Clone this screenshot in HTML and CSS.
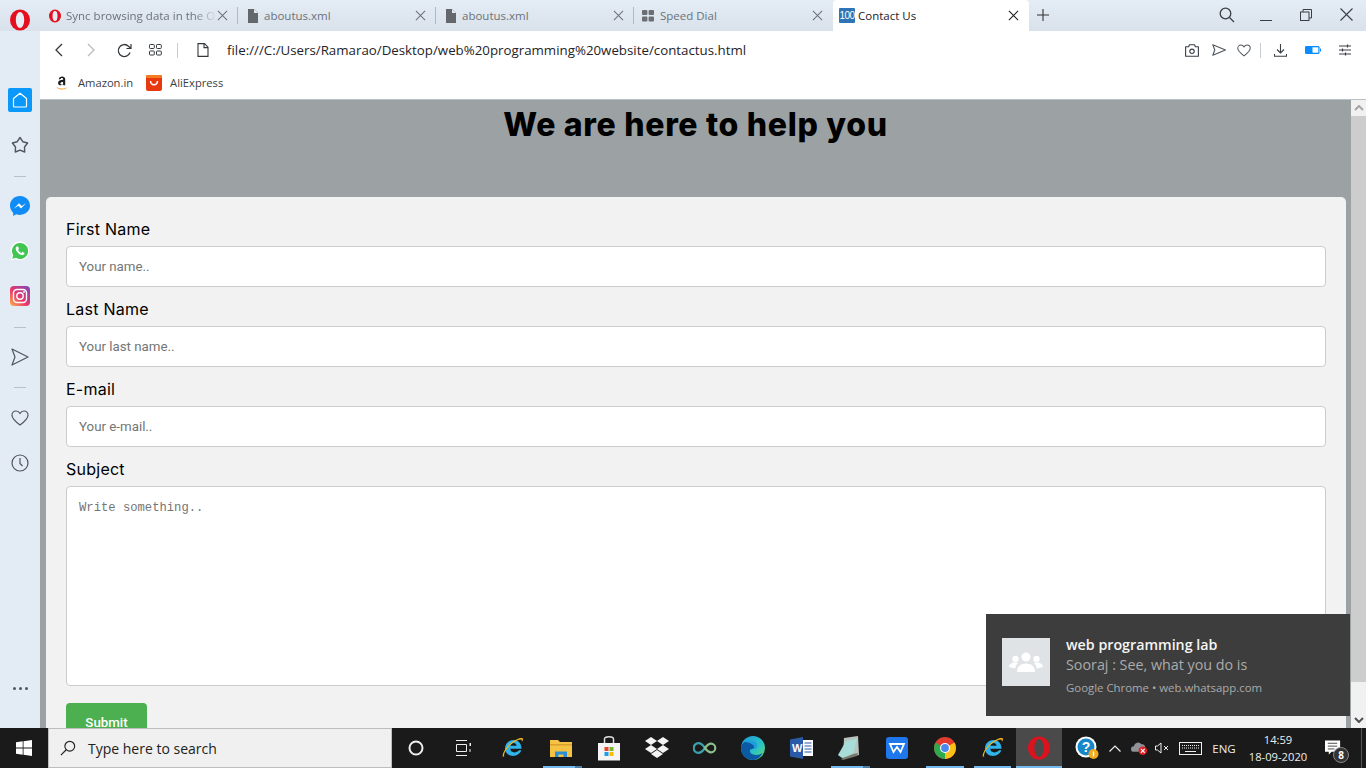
FILE: index.html
```html
<!DOCTYPE html>
<html lang="en">
<head>
    <meta charset="UTF-8">
    <title>Contact Us</title>
    <link rel="stylesheet" href="styles.css">
</head>
<body>
<div class="browser">
    <div class="tabbar">
        <div class="logo-slot">
            <svg width="22" height="24" viewBox="0 0 22 24"><ellipse cx="11" cy="12" rx="10" ry="10.5" fill="#e3101f"/><ellipse cx="11" cy="12" rx="4.2" ry="8" fill="#e6edf5"/></svg>
        </div>
        <div class="tab">
            <svg class="fav" width="14" height="14" viewBox="0 0 14 14"><ellipse cx="7" cy="7" rx="6" ry="6.5" fill="#e3101f"/><ellipse cx="7" cy="7" rx="2.5" ry="5" fill="#e6edf5"/></svg>
            <span class="tab-title faded">Sync browsing data in the O</span>
            <svg class="tab-x" width="11" height="11" viewBox="0 0 12 12"><path d="M1 1l10 10M11 1L1 11" stroke="#6d7176" stroke-width="1.1"/></svg>
        </div>
        <div class="tab">
            <svg class="fav fav-file" width="12" height="14" viewBox="0 0 12 14"><path d="M1 0h6l4 4v10H1z" fill="#64686c"/><path d="M7 0v4h4" fill="#e2eaf3"/></svg>
            <span class="tab-title">aboutus.xml</span>
            <svg class="tab-x" width="11" height="11" viewBox="0 0 12 12"><path d="M1 1l10 10M11 1L1 11" stroke="#6d7176" stroke-width="1.1"/></svg>
        </div>
        <div class="tab">
            <svg class="fav fav-file" width="12" height="14" viewBox="0 0 12 14"><path d="M1 0h6l4 4v10H1z" fill="#64686c"/><path d="M7 0v4h4" fill="#e2eaf3"/></svg>
            <span class="tab-title">aboutus.xml</span>
            <svg class="tab-x" width="11" height="11" viewBox="0 0 12 12"><path d="M1 1l10 10M11 1L1 11" stroke="#6d7176" stroke-width="1.1"/></svg>
        </div>
        <div class="tab no-line">
            <svg class="fav fav-dial" width="12" height="12" viewBox="0 0 12 12" fill="#6b6f73"><rect width="5.4" height="5" rx="1"/><rect x="6.6" width="5.4" height="5" rx="1"/><rect y="6.4" width="5.4" height="5" rx="1"/><rect x="6.6" y="6.4" width="5.4" height="5" rx="1"/></svg>
            <span class="tab-title">Speed Dial</span>
            <svg class="tab-x" width="11" height="11" viewBox="0 0 12 12"><path d="M1 1l10 10M11 1L1 11" stroke="#6d7176" stroke-width="1.1"/></svg>
        </div>
        <div class="tab active">
            <span class="fav-100">100</span>
            <span class="tab-title">Contact Us</span>
            <svg class="tab-x" width="11" height="11" viewBox="0 0 12 12"><path d="M1 1l10 10M11 1L1 11" stroke="#222" stroke-width="1.2"/></svg>
        </div>
        <svg class="new-tab" width="12" height="12" viewBox="0 0 12 12"><path d="M6 0v12M0 6h12" stroke="#333" stroke-width="1.1"/></svg>
        <div class="window-btns">
            <svg class="w-search" width="16" height="16" viewBox="0 0 16 16" fill="none" stroke="#3a3f45" stroke-width="1.3"><circle cx="6.5" cy="6.5" r="5.3"/><path d="M10.5 10.5L15 15"/></svg>
            <svg class="w-min" width="12" height="12" viewBox="0 0 12 12"><path d="M0 10.5h12" stroke="#3a3f45" stroke-width="1"/></svg>
            <svg class="w-max" width="12" height="12" viewBox="0 0 12 12" fill="none" stroke="#3a3f45"><rect x=".5" y="3" width="8.5" height="8.5"/><path d="M3 3V.5h8.5V9H9"/></svg>
            <svg class="w-close" width="13" height="13" viewBox="0 0 13 13"><path d="M.5.5l12 12M12.5.5l-12 12" stroke="#3a3f45" stroke-width="1.1"/></svg>
        </div>
    </div>

    <div class="middle">
        <aside class="sidebar">
            <div class="side-home">
                <svg width="16" height="16" viewBox="0 0 16 16" fill="none" stroke="#fff" stroke-width="1.2"><path d="M8 1.2L14.5 6.5V14a1 1 0 0 1-1 1h-11a1 1 0 0 1-1-1V6.5z" stroke-linejoin="round"/></svg>
            </div>
            <svg class="side-star" width="18" height="18" viewBox="0 0 18 18" fill="none" stroke="#50565d" stroke-width="1.4"><path d="M9 1.5L11.8 5.700 16.600 7 13.500 11 13.700 16 9 14.200 4.300 16 4.500 11 1.400 7 6.200 5.700z" stroke-linejoin="round"/></svg>
            <span class="side-line"></span>
            <svg class="side-msg" width="20" height="20" viewBox="0 0 20 20"><path d="M10 0C4.400 0 0 4.100 0 9.600c0 2.900 1.200 5.400 3.200 7.100V20l3-1.700c1.200.4 2.500.6 3.800.6 5.600 0 10-4.100 10-9.300S15.600 0 10 0z" fill="#0f8cf5"/><path d="M4 12.500l5-5.300 2.700 2.700 4.300-2.700-5 5.300-2.700-2.700z" fill="#fff"/></svg>
            <svg class="side-wa" width="20" height="20" viewBox="0 0 20 20"><path d="M10 .5a9.300 9.300 0 0 0-8 14L.5 19.500l5.200-1.400A9.300 9.300 0 1 0 10 .5z" fill="#fff"/><path d="M10 2a8 8 0 0 0-6.800 12.200l-1 3.600 3.700-1A8 8 0 1 0 10 2z" fill="#43c554"/><path d="M7 5.500c-.8.300-1.500 1.400-1.200 2.800.5 2.400 3.300 5.300 5.800 5.800 1.400.3 2.600-.5 2.800-1.300l.1-.9-2.200-1.100-1 1.100c-1.300-.4-2.700-1.800-3.200-3.100l.9-1-.9-2.300z" fill="#fff"/></svg>
            <svg class="side-ig" width="20" height="20" viewBox="0 0 20 20"><defs><linearGradient id="ig" x1="0" y1="1" x2="1" y2="0"><stop offset="0" stop-color="#fdb34a"/><stop offset=".45" stop-color="#e8366b"/><stop offset="1" stop-color="#7a46c0"/></linearGradient></defs><rect width="20" height="20" rx="4" fill="url(#ig)"/><rect x="3.5" y="3.5" width="13" height="13" rx="3.5" fill="none" stroke="#fff" stroke-width="1.4"/><circle cx="10" cy="10" r="3.2" fill="none" stroke="#fff" stroke-width="1.4"/><circle cx="14" cy="6" r=".9" fill="#fff"/></svg>
            <span class="side-line line-two"></span>
            <svg class="side-send" width="18" height="18" viewBox="0 0 18 18" fill="none" stroke="#50565d" stroke-width="1.2"><path d="M1 1l16 8-16 8 3-8z" stroke-linejoin="round"/></svg>
            <span class="side-line line-three"></span>
            <svg class="side-heart" width="18" height="16" viewBox="0 0 18 16" fill="none" stroke="#50565d" stroke-width="1.2"><path d="M9 15C5 12 1 9 1 5.200 1 2.800 2.800 1 5 1c1.700 0 3.100.9 4 2.500C9.900 1.900 11.300 1 13 1c2.200 0 4 1.800 4 4.200C17 9 13 12 9 15z" stroke-linejoin="round"/></svg>
            <svg class="side-clock" width="18" height="18" viewBox="0 0 18 18" fill="none" stroke="#50565d" stroke-width="1.2"><circle cx="9" cy="9" r="8"/><path d="M9 4v5.500l2.500 2.500"/></svg>
            <div class="side-dots"><i></i><i></i><i></i></div>
        </aside>

        <div class="main-col">
            <div class="addressbar">
                <svg class="nav-back" width="10" height="14" viewBox="0 0 10 14" fill="none" stroke="#33383d" stroke-width="1.3"><path d="M8 1L2 7l6 6"/></svg>
                <svg class="nav-fwd" width="10" height="14" viewBox="0 0 10 14" fill="none" stroke="#b8bcc0" stroke-width="1.3"><path d="M2 1l6 6-6 6"/></svg>
                <svg class="nav-reload" width="15" height="15" viewBox="0 0 15 15" fill="none" stroke="#33383d" stroke-width="1.3"><path d="M13 9.500A6 6 0 1 1 11.500 3.200L14 5.500"/><path d="M14 1v4.500H9.500" stroke-width="1.2"/></svg>
                <svg class="nav-grid" width="13" height="12" viewBox="0 0 13 12" fill="none" stroke="#33383d"><rect x=".5" y=".5" width="4.8" height="4" rx=".8"/><rect x="7.5" y=".5" width="4.8" height="4" rx=".8"/><rect x=".5" y="7" width="4.8" height="4" rx=".8"/><rect x="7.5" y="7" width="4.8" height="4" rx=".8"/></svg>
                <span class="nav-sep"></span>
                <svg class="nav-doc" width="12" height="14" viewBox="0 0 12 14" fill="none" stroke="#33383d" stroke-width="1.1"><path d="M1 .6h6.500L11 4.200v9.200H1z"/><path d="M7 .6v4h4"/></svg>
                <span class="url">file:///C:/Users/Ramarao/Desktop/web%20programming%20website/contactus.html</span>
                <div class="addr-tools">
                    <svg class="t-cam" width="14" height="13" viewBox="0 0 14 13" fill="none" stroke="#3a3f45" stroke-width="1.1"><path d="M.6 2.800h3L4.500.8h5l.9 2h3v9.500H.6z" stroke-linejoin="round"/><circle cx="7" cy="7.300" r="2.200"/></svg>
                    <svg class="t-send" width="14" height="12" viewBox="0 0 14 12" fill="none" stroke="#50565d" stroke-width="1.1"><path d="M.8.8L13.500 6 .8 11.200 2.800 6z" stroke-linejoin="round"/></svg>
                    <svg class="t-heart" width="14" height="13" viewBox="0 0 18 16" fill="none" stroke="#50565d" stroke-width="1.3"><path d="M9 15C5 12 1 9 1 5.200 1 2.800 2.800 1 5 1c1.700 0 3.100.9 4 2.500C9.900 1.900 11.300 1 13 1c2.200 0 4 1.800 4 4.200C17 9 13 12 9 15z" stroke-linejoin="round"/></svg>
                    <span class="t-sep"></span>
                    <svg class="t-down" width="13" height="13" viewBox="0 0 13 13" fill="none" stroke="#3a3f45" stroke-width="1.1"><path d="M6.500 0v8.500M3 5.500l3.500 3.500L10 5.500M.5 10v2.300h12V10"/></svg>
                    <svg class="t-batt" width="16" height="8" viewBox="0 0 16 8"><rect width="14.5" height="8" rx="1.2" fill="#0a8cff"/><rect x="7.5" y="1.3" width="5.8" height="5.4" fill="#fff"/><rect x="15" y="2.5" width="1" height="3" fill="#0a8cff"/></svg>
                    <svg class="t-sliders" width="12" height="12" viewBox="0 0 12 12" stroke="#3a3f45"><path d="M0 2h12M0 6h12M0 10h12"/><path d="M8.500.5v3M3.500 4.500v3M6.500 8.500v3" stroke-width="1.2"/></svg>
                </div>
            </div>
            <div class="bookmarks">
                <svg class="bm-a" width="14" height="16" viewBox="0 0 12 15"><path d="M3 4.200c.2-1.900 1.600-2.700 3-2.700 1.700 0 3 .8 3 2.600v5.400h-1.800l-.2-.8c-1.600 1.500-4.700 1.200-4.700-1.300 0-2 2-2.800 4.800-2.900v-.4c0-1-.4-1.400-1.200-1.400-.7 0-1.100.4-1.200 1.100zM7 6.500c-1.300 0-2.500.4-2.500 1.500 0 1.200 1.800 1.200 2.500.1z" fill="#1c1c1c"/><path d="M.5 11c3.500 2.300 7.500 2.300 11 .3-2.700 3.200-8.300 3.200-11-.3z" fill="#f79c21"/></svg>
                <span class="bm-text">Amazon.in</span>
                <svg class="bm-ali" width="16" height="16" viewBox="0 0 16 16"><rect width="16" height="16" rx="2" fill="#e8380d"/><rect width="16" height="3" rx="1" fill="#f47b20"/><path d="M4.500 6c.3 5 6.700 5 7 0" fill="none" stroke="#fff" stroke-width="1.5"/></svg>
                <span class="bm-text">AliExpress</span>
            </div>

            <div class="viewport">
                <main class="page">
                    <h1>We are here to help you</h1>
                    <form class="contact-card">
                        <label for="fname">First Name</label>
                        <input id="fname" type="text" placeholder="Your name..">
                        <label for="lname">Last Name</label>
                        <input id="lname" type="text" placeholder="Your last name..">
                        <label for="email">E-mail</label>
                        <input id="email" type="text" placeholder="Your e-mail..">
                        <label for="subject">Subject</label>
                        <textarea id="subject" placeholder="Write something.."></textarea>
                        <input class="submit" type="submit" value="Submit">
                    </form>
                </main>
                <div class="scrollbar">
                    <div class="sb-btn">
                        <svg width="10" height="6" viewBox="0 0 10 6"><path d="M1 5l4-4 4 4" fill="none" stroke="#a6a6a6" stroke-width="2"/></svg>
                    </div>
                    <div class="sb-thumb"></div>
                    <div class="sb-btn sb-end">
                        <svg width="10" height="6" viewBox="0 0 10 6"><path d="M1 1l4 4 4-4" fill="none" stroke="#505050" stroke-width="2"/></svg>
                    </div>
                </div>
            </div>
        </div>
    </div>

    <footer class="taskbar">
        <div class="start">
            <svg width="16" height="16" viewBox="0 0 16 16" fill="#fff"><path d="M0 2.300L6.700 1.300V7.600H0zM7.500 1.200L16 0V7.600H7.500zM0 8.400H6.700V14.700L0 13.700zM7.500 8.400H16V16L7.500 14.800z"/></svg>
        </div>
        <div class="searchbox">
            <svg width="16" height="16" viewBox="0 0 18 18" fill="none" stroke="#222" stroke-width="1.3"><circle cx="11" cy="7" r="5.5"/><path d="M7 11l-6 6"/></svg>
            <span>Type here to search</span>
        </div>
        <div class="task-btn cortana"><svg width="16" height="16" viewBox="0 0 16 16"><circle cx="8" cy="8" r="6.5" fill="none" stroke="#eee" stroke-width="2"/></svg></div>
        <div class="task-btn taskview"><svg width="17" height="16" viewBox="0 0 17 16" fill="none" stroke="#eee"><path d="M0 .5h11M.5 4.500h10v7H.5zM0 15.500h11M14 3v3M14.500 3v3M14 9v3"/></svg></div>

        <div class="task-btn first-app"><svg width="24" height="24" viewBox="0 0 24 24"><path d="M4 12.500C4 7.500 8 4 12.500 4c4.500 0 8 3.300 8 8.800H9.300c0 3.900 5.500 5 8.800 1.500h2.200c-1.500 4-5 5.700-8 5.700-4.900 0-8.300-3.500-8.300-7.500zm5.400-2.700h6.200c0-3.700-5.700-4-6.200 0z" fill="#2fb4ec"/><path d="M1.800 20.800C.8 17 7 7 16 3.300c2.300-1 5-1.700 5.800-.7.600.9-.2 2.400-1 3.500.1-1 .3-2-.4-2.400C18 2.600 8 8 4 16c-1 2.100-1.300 3.700-.6 4.300z" fill="#f2b420"/></svg></div>
        <div class="task-btn running stacked"><svg width="22" height="19" viewBox="0 0 22 19"><path d="M0 1h8l2 2h12v15H0z" fill="#f5c244"/><rect y="5" width="22" height="1.5" fill="#d9a02a"/><path d="M5 18v-5.500h12V18h-3.500v-2.500h-5V18z" fill="#2a8fd6"/></svg></div>
        <div class="task-btn"><svg width="24" height="25" viewBox="0 0 24 25"><path d="M7.500 7V3c0-3 9-3 9 0v4" fill="none" stroke="#ddd" stroke-width="1.5"/><rect x="1" y="7" width="22" height="17.5" fill="#f4f4f4"/><rect x="7.5" y="11" width="4" height="4" fill="#e8452a"/><rect x="12.5" y="11" width="4" height="4" fill="#76b82a"/><rect x="7.5" y="16" width="4" height="4" fill="#18a0e8"/><rect x="12.5" y="16" width="4" height="4" fill="#fbbc09"/></svg></div>
        <div class="task-btn"><svg width="24" height="23" viewBox="0 0 24 23" fill="#f4f4f4"><path d="M6 0l6 4-6 4-6-4zM18 0l6 4-6 4-6-4zM6 8l6 4-6 4-6-4zM18 8l6 4-6 4-6-4zM6 17l6-4 6 4-6 4z"/></svg></div>
        <div class="task-btn"><svg width="24" height="12" viewBox="0 0 24 12" fill="none" stroke-width="2.2"><path d="M12 6C9.500 2.500 7.500 1.200 5.500 1.200A4.800 4.800 0 0 0 5.500 10.800C7.500 10.800 9.500 9.500 12 6z" stroke="#3ba3ad"/><path d="M12 6c2.500-3.500 4-4.300 6-4.300a4.300 4.300 0 0 1 0 8.600c-2 0-3.500-.8-6-4.300z" stroke="#8dc08a"/></svg></div>
        <div class="task-btn"><svg width="24" height="24" viewBox="0 0 24 24"><defs><linearGradient id="edge" x1="0" y1="0" x2="1" y2="1"><stop offset="0" stop-color="#1a9be0"/><stop offset=".6" stop-color="#2bc4c4"/><stop offset="1" stop-color="#6fdc5c"/></linearGradient></defs><circle cx="12" cy="12" r="12" fill="url(#edge)"/><path d="M0 12C1 4 8 5 12 8c3.500 2.500 3 5-1 5-3 0-3 4 1 5.500 3 1 7 .5 9.500-1.500C19 22 15.500 24 12 24 5 24 0 19 0 12z" fill="#0c59a4"/><path d="M3 6c3-2.500 9-2.500 12 .5 1.500 1.500 2 4 .5 5.500-1 1-3.500 1.200-4.500 1 3-.5 2.500-3 .5-4.500C8.500 6.500 5 6 3 6z" fill="#1e9fdc"/></svg></div>
        <div class="task-btn"><svg width="23" height="22" viewBox="0 0 23 22"><path d="M13 0v22L0 19.500v-17z" fill="#2b5aa8"/><rect x="13" y="3" width="10" height="16" fill="#fff"/><path d="M14.500 6h7M14.500 9h7M14.500 12h7M14.500 15h7" stroke="#2b5aa8" stroke-width="1.2"/><text x="2" y="15" font-family="Liberation Sans" font-size="11" font-weight="700" fill="#fff">W</text></svg></div>
        <div class="task-btn running stacked"><svg width="24" height="24" viewBox="0 0 24 24"><path d="M7 2l14-2 1 19-16 3z" fill="#b9c4bf"/><path d="M1 19L9 5l11-2-4 15-11 4z" fill="#a7dcd8"/><path d="M4 23l12-5 5-1-1 3-14 4z" fill="#7a7a6e"/></svg></div>
        <div class="task-btn"><svg width="22" height="22" viewBox="0 0 22 22"><rect width="22" height="22" rx="3" fill="#1e78ec"/><path d="M4 7h14l-3.500 8L11 10l-3.500 5z" fill="none" stroke="#fff" stroke-width="1.8"/></svg></div>
        <div class="task-btn running"><svg width="22" height="22" viewBox="0 0 22 22"><circle cx="11" cy="11" r="11" fill="#e33b2e"/><path d="M11 11L1.500 5.500A11 11 0 0 0 11 22z" fill="#2da94f"/><path d="M11 11v11A11 11 0 0 0 20.500 5.500z" fill="#fbc116"/><circle cx="11" cy="11" r="5" fill="#fff"/><circle cx="11" cy="11" r="3.9" fill="#4a87ee"/></svg></div>
        <div class="task-btn running ie-two"><svg width="24" height="24" viewBox="0 0 24 24"><path d="M4 12.500C4 7.500 8 4 12.500 4c4.500 0 8 3.300 8 8.800H9.300c0 3.900 5.500 5 8.800 1.500h2.200c-1.500 4-5 5.700-8 5.700-4.900 0-8.300-3.500-8.300-7.500zm5.400-2.700h6.200c0-3.700-5.700-4-6.200 0z" fill="#2fb4ec"/><path d="M1.800 20.800C.8 17 7 7 16 3.300c2.300-1 5-1.700 5.800-.7.600.9-.2 2.400-1 3.500.1-1 .3-2-.4-2.400C18 2.600 8 8 4 16c-1 2.100-1.300 3.700-.6 4.300z" fill="#f2b420"/></svg></div>
        <div class="task-btn running opera-btn"><svg width="22" height="24" viewBox="0 0 22 24"><ellipse cx="11" cy="12" rx="11" ry="11.500" fill="#d9141f"/><ellipse cx="11" cy="12" rx="4.700" ry="9" fill="#4a4a4a"/></svg></div>

        <div class="tray">
            <div class="tray-help"><svg width="24" height="24" viewBox="0 0 24 24"><circle cx="11" cy="11" r="10.500" fill="#fff"/><circle cx="11" cy="11" r="8.500" fill="#1687c9"/><text x="6.800" y="16" font-family="Liberation Sans" font-size="14" font-weight="700" fill="#fff">?</text><circle cx="18.500" cy="18" r="5" fill="#f4a91f"/><path d="M18.500 15.500v5" stroke="#fff" stroke-width="1.4"/></svg></div>
            <svg class="tray-caret" width="12" height="7" viewBox="0 0 12 7"><path d="M.5 6.500L6 1l5.500 5.500" fill="none" stroke="#eee" stroke-width="1.2"/></svg>
            <svg class="tray-cloud" width="17" height="15" viewBox="0 0 18 15"><path d="M3 11a3 3 0 0 1 0-6 4.500 4.500 0 0 1 8-2 3.500 3.500 0 0 1 4 3v5z" fill="#8f9397"/><circle cx="12.500" cy="10" r="4.500" fill="#e01f26"/><path d="M10.500 8l4 4M14.500 8l-4 4" stroke="#fff" stroke-width="1.2"/></svg>
            <svg class="tray-sound" width="14" height="12" viewBox="0 0 14 12" fill="none" stroke="#eee"><path d="M.5 4v4h2L6 11V1L2.500 4z"/><path d="M9 4l4 4M13 4l-4 4"/></svg>
            <svg class="tray-kb" width="23" height="13" viewBox="0 0 23 13" fill="none" stroke="#eee"><rect x=".5" y=".5" width="22" height="12"/><path d="M3 3.500h17M3 6h17" stroke-dasharray="1 1"/><path d="M6 9.500h11"/></svg>
            <span class="tray-lang">ENG</span>
            <div class="tray-clock"><span>14:59</span><span>18-09-2020</span></div>
            <div class="tray-notif">
                <svg width="17" height="16" viewBox="0 0 18 16"><path d="M0 0h16v12H7l-3 3v-3H0z" fill="#fff"/><path d="M3 3h10M3 6h10M3 9h7" stroke="#444"/></svg>
                <span class="badge">8</span>
            </div>
            <span class="show-desktop"></span>
        </div>
    </footer>

    <div class="toast">
        <div class="toast-icon">
            <svg width="34" height="20" viewBox="0 0 34 20" fill="#fff"><circle cx="17" cy="5" r="4.500"/><circle cx="6.500" cy="7" r="3.200"/><circle cx="27.500" cy="7" r="3.200"/><path d="M8 20c0-5 3-8.500 9-8.500s9 3.500 9 8.500z"/><path d="M0 15c0-2.500 2.500-4.500 6.500-4.500 1 0 2 .2 2.700.5C7.500 12.500 6.500 14 6.300 16.500z"/><path d="M34 15c0-2.500-2.500-4.500-6.500-4.500-1 0-2 .2-2.700.5 1.700 1.500 2.700 3 2.900 5.500z"/></svg>
        </div>
        <div class="toast-text">
            <span class="toast-title">web programming lab</span>
            <span class="toast-body">Sooraj : See, what you do is</span>
            <span class="toast-source">Google Chrome &bull; web.whatsapp.com</span>
        </div>
    </div>
</div>
</body>
</html>
```

FILE: styles.css
```css
* {
    box-sizing: border-box;
}
html, body {
    margin: 0;
    height: 100%;
    overflow: hidden;
}
body {
    font-family: 'Open Sans', 'Noto Sans', sans-serif;
    color: #222;
}
svg {
    display: block;
    flex-shrink: 0;
}
.browser {
    position: relative;
    display: flex;
    flex-direction: column;
    width: 1366px;
    height: 768px;
}

/* tab strip */
.tabbar {
    display: flex;
    align-items: flex-end;
    height: 31px;
    background: linear-gradient(#e4ecf5, #d9e1ea);
}
.logo-slot {
    width: 40px;
    height: 31px;
    padding: 8px 0 0 9px;
}
.tab {
    position: relative;
    display: flex;
    align-items: center;
    width: 198px;
    height: 31px;
    padding: 0 10px 0 8px;
    font-size: 11.5px;
    color: #6c7278;
}
.tab::after {
    content: "";
    position: absolute;
    right: 0;
    top: 7px;
    height: 17px;
    width: 1px;
    background: #b2b8bf;
}
.tab.no-line::after,
.tab.active::after {
    display: none;
}
.tab.no-line {
    width: 199px;
}
.fav {
    margin-right: 4px;
}
.fav-file {
    margin: 0 5px 0 1px;
}
.fav-dial {
    margin-right: 6px;
}
.tab-title {
    flex: 1;
    overflow: hidden;
    white-space: nowrap;
}
.faded {
    -webkit-mask-image: linear-gradient(90deg, #000 85%, transparent);
    mask-image: linear-gradient(90deg, #000 85%, transparent);
}
.tab.active {
    width: 196px;
    padding-left: 6px;
    background: #fff;
    color: #1e2226;
    border-radius: 4px 4px 0 0;
}
.fav-100 {
    width: 16px;
    height: 15px;
    margin-right: 3px;
    background: #2f74b5;
    border-radius: 1px;
    color: #fff;
    font-family: 'Liberation Sans', sans-serif;
    font-size: 10px;
    line-height: 15px;
    text-align: center;
    letter-spacing: -0.5px;
}
.new-tab {
    margin: 0 0 10px 8px;
}
.window-btns {
    display: flex;
    align-items: center;
    height: 31px;
    margin-left: auto;
}
.w-search {
    margin: 0 25px 2px 0;
}
.w-min {
    margin-right: 28px;
}
.w-max {
    margin: 0 28px 2px 0;
}
.w-close {
    margin: 0 13px 2px 0;
}

/* everything under the tabs */
.middle {
    display: flex;
    flex: 1;
    min-height: 0;
}
.sidebar {
    display: flex;
    flex-direction: column;
    align-items: center;
    width: 40px;
    padding-top: 57px;
    background: #e3ebf4;
}
.side-home {
    display: flex;
    align-items: center;
    justify-content: center;
    width: 24px;
    height: 24px;
    background: #0a98fb;
    border-radius: 2px;
}
.side-star {
    margin-top: 24px;
}
.side-line {
    width: 12px;
    height: 1px;
    margin-top: 22px;
    background: #b7c2cc;
}
.side-msg {
    margin-top: 19px;
}
.side-wa {
    margin-top: 25px;
}
.side-ig {
    margin-top: 25px;
}
.side-line.line-two {
    margin-top: 21px;
}
.side-send {
    margin-top: 20px;
}
.side-line.line-three {
    margin-top: 21px;
}
.side-heart {
    margin-top: 22px;
}
.side-clock {
    margin-top: 28px;
}
.side-dots {
    display: flex;
    gap: 3px;
    margin-top: auto;
    margin-bottom: 38px;
}
.side-dots i {
    width: 3px;
    height: 3px;
    border-radius: 50%;
    background: #50565d;
}
.main-col {
    display: flex;
    flex-direction: column;
    flex: 1;
    min-width: 0;
}
.addressbar {
    display: flex;
    align-items: center;
    height: 38px;
    background: #fff;
}
.nav-back {
    margin-left: 14px;
}
.nav-fwd {
    margin-left: 22px;
}
.nav-reload {
    margin-left: 21px;
}
.nav-grid {
    margin-left: 17px;
}
.nav-sep {
    width: 1px;
    height: 15px;
    margin-left: 15px;
    background: #c9cdd1;
}
.nav-doc {
    margin-left: 19px;
}
.url {
    margin-left: 18px;
    font-size: 13.3px;
    color: #1f2327;
    white-space: nowrap;
}
.addr-tools {
    display: flex;
    align-items: center;
    margin-left: auto;
}
.t-send {
    margin-left: 13px;
}
.t-heart {
    margin-left: 11px;
}
.t-sep {
    width: 1px;
    height: 15px;
    margin-left: 9px;
    background: #c9cdd1;
}
.t-down {
    margin-left: 13px;
}
.t-batt {
    margin-left: 18px;
}
.t-sliders {
    margin: 0 15px 0 18px;
}
.bookmarks {
    display: flex;
    align-items: center;
    height: 31px;
    padding: 0 0 3px 15px;
    background: #fff;
    border-bottom: 1px solid #b9c1c7;
}
.bm-text {
    font-size: 11.2px;
    color: #3a3f45;
}
.bm-a {
    margin-right: 9px;
}
.bm-ali {
    margin: 0 8px 0 13px;
}

/* the page in the browser */
.viewport {
    display: flex;
    flex: 1;
    min-height: 0;
}
.page {
    flex: 1;
    min-width: 0;
    overflow: hidden;
    background: #9ca1a3;
}
h1 {
    margin: 0;
    padding-top: 5px;
    height: 97px;
    font-family: 'Inter', sans-serif;
    font-size: 32px;
    font-weight: 800;
    line-height: 40px;
    letter-spacing: 0.7px;
    color: #000;
    text-align: center;
}
.contact-card {
    display: flex;
    flex-direction: column;
    width: 1300px;
    margin-left: 6px;
    padding: 20px;
    background: #f2f2f2;
    border-radius: 5px;
}
label {
    height: 29px;
    font-family: 'Inter', sans-serif;
    font-size: 16px;
    line-height: 24px;
    letter-spacing: 0.25px;
    color: #000;
}
input[type=text], textarea {
    width: 100%;
    height: 41px;
    margin-bottom: 10px;
    padding: 0 12px;
    background: #fff;
    border: 1px solid #ccc;
    border-radius: 4px;
    font-family: 'Roboto', sans-serif;
    font-size: 13.3px;
    outline: none;
}
textarea {
    height: 200px;
    margin-bottom: 17px;
    padding: 14px 12px;
    font-family: 'Liberation Mono', monospace;
    font-size: 12.2px;
    resize: none;
}
input::placeholder, textarea::placeholder {
    color: #757575;
}
.submit {
    width: 81px;
    height: 40px;
    padding: 0 0 2px;
    border: 0;
    border-radius: 4px;
    background: #4caf50;
    color: #fff;
    font-family: 'Roboto', sans-serif;
    font-size: 13.3px;
    font-weight: 500;
}
.scrollbar {
    display: flex;
    flex-direction: column;
    width: 15px;
    background: #f1f1f1;
}
.sb-btn {
    display: flex;
    align-items: center;
    justify-content: center;
    height: 16px;
}
.sb-end {
    margin-top: auto;
}
.sb-thumb {
    height: 566px;
    background: #cdcdcd;
}

/* windows taskbar */
.taskbar {
    display: flex;
    align-items: center;
    height: 40px;
    background: #1a1a1a;
}
.start {
    display: flex;
    align-items: center;
    justify-content: center;
    width: 48px;
    height: 40px;
}
.searchbox {
    display: flex;
    align-items: center;
    gap: 12px;
    width: 344px;
    height: 40px;
    padding-left: 11px;
    background: #f0f0f0;
    border: 1px solid #bdbdbd;
    font-size: 14px;
    color: #222;
}
.task-btn {
    position: relative;
    display: flex;
    align-items: center;
    justify-content: center;
    width: 48px;
    height: 40px;
}
.task-btn.taskview {
    width: 49px;
}
.task-btn.ie-two {
    width: 47px;
}
.task-btn.opera-btn {
    width: 46px;
    background: #4a4a4a;
}
.task-btn.running::after {
    content: "";
    position: absolute;
    left: 5px;
    right: 5px;
    bottom: 0;
    height: 2px;
    background: #76b9ed;
}
.task-btn.stacked::after {
    left: 6px;
    right: 3px;
    background: linear-gradient(90deg, #76b9ed 82%, #4d7fa6 82%);
}
.task-btn.opera-btn::after {
    left: 0;
    right: 0;
}
.tray {
    display: flex;
    align-items: center;
    flex: 1;
    height: 40px;
    color: #eee;
}
.tray-help {
    display: flex;
    justify-content: center;
    width: 46px;
    padding-left: 4px;
}
.tray-caret {
    margin-left: 1px;
}
.tray-cloud {
    margin-left: 10px;
}
.tray-sound {
    margin-left: 7px;
}
.tray-kb {
    margin-left: 10px;
}
.tray-lang {
    width: 36px;
    margin-left: 4px;
    font-size: 11.5px;
    text-align: center;
}
.tray-clock {
    display: flex;
    flex-direction: column;
    align-items: center;
    gap: 2px;
    width: 62px;
    margin-left: 5px;
    font-size: 11.2px;
    line-height: 15px;
}
.tray-notif {
    position: relative;
    width: 47px;
    padding-left: 16px;
}
.badge {
    position: absolute;
    left: 24px;
    top: 7px;
    width: 16px;
    height: 16px;
    border: 1px solid #888;
    border-radius: 50%;
    background: #333;
    color: #fff;
    font-size: 10px;
    font-weight: 700;
    line-height: 14px;
    text-align: center;
}
.show-desktop {
    width: 1px;
    height: 40px;
    margin-left: 5px;
    background: #555;
}

/* chrome notification, sits over the page */
.toast {
    position: absolute;
    left: 986px;
    top: 614px;
    display: flex;
    width: 364px;
    height: 102px;
    padding: 24px 16px;
    background: #3d3d3d;
}
.toast-icon {
    display: flex;
    align-items: center;
    justify-content: center;
    width: 48px;
    height: 48px;
    margin-right: 16px;
    background: #dfe3e5;
}
.toast-text {
    display: flex;
    flex-direction: column;
    margin-top: -3px;
}
.toast-title {
    font-size: 14.25px;
    font-weight: 600;
    line-height: 20px;
    color: #f5f5f5;
}
.toast-body {
    font-size: 14.3px;
    line-height: 20px;
    color: #ababab;
}
.toast-source {
    margin-top: 4px;
    font-size: 11.4px;
    line-height: 18px;
    color: #ababab;
}
```
